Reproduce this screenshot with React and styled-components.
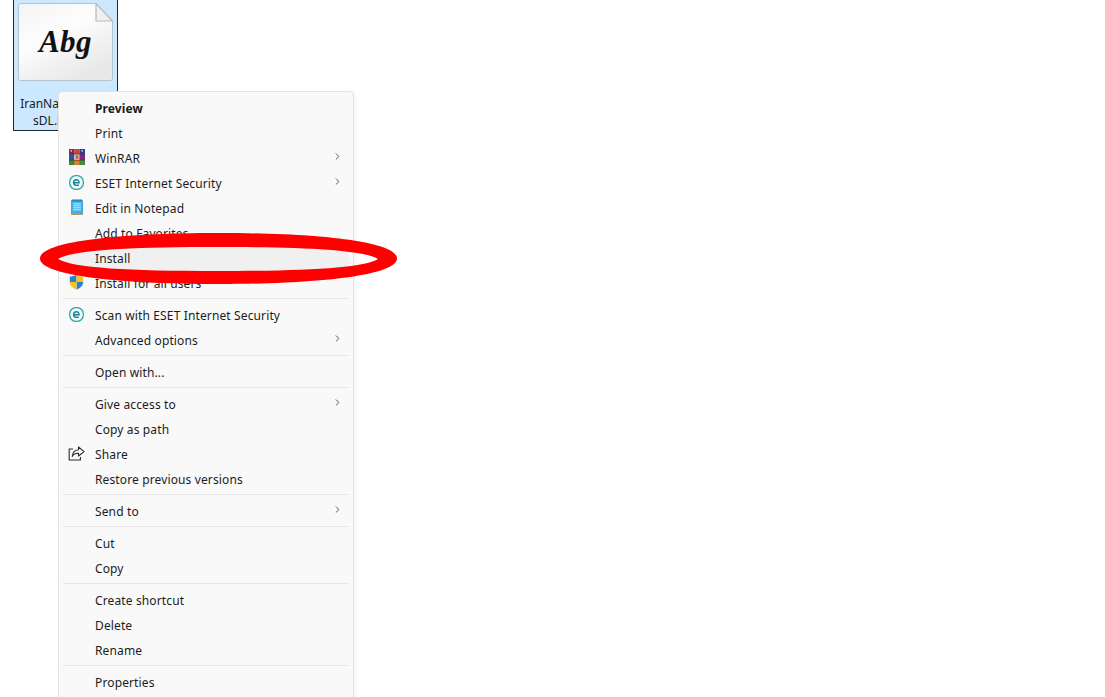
import React from "react";
import styled, { createGlobalStyle } from "styled-components";
import { ChevronRight } from "lucide-react";

const GlobalStyle = createGlobalStyle`
  html, body {
    margin: 0;
    padding: 0;
    background: #fff;
  }
  body {
    font-family: "Noto Sans", "Open Sans", sans-serif;
    color: #1a1a1a;
  }
`;

const Desktop = styled.div`
  position: relative;
  width: 1105px;
  height: 697px;
  overflow: hidden;
  background: #fff;
`;

const FileTile = styled.div`
  width: 103px;
  height: 130px;
  margin-left: 13px;
  background: #cce8ff;
  border: 1px solid #1f2a33;
  border-top: none;
  display: flex;
  flex-direction: column;
  align-items: center;
`;

const FontPage = styled.div`
  position: relative;
  width: 95px;
  height: 78px;
  margin-top: 3px;
  display: flex;
  align-items: center;
  justify-content: center;
`;

const PageArt = styled.svg`
  position: absolute;
  inset: 0;
`;

const Sample = styled.span`
  position: relative;
  font-family: "Liberation Serif", serif;
  font-style: italic;
  font-weight: 700;
  font-size: 31px;
  letter-spacing: 0.5px;
  color: #111;
`;

const FileName = styled.div`
  margin-top: 14px;
  width: 100%;
  font-size: 12px;
  line-height: 17px;
  text-align: center;
  color: #1a1a1a;
`;

const Menu = styled.div`
  position: absolute;
  left: 58px;
  top: 91px;
  width: 296px;
  box-sizing: border-box;
  padding: 4px 0;
  background: #f9f9f9;
  border: 1px solid #e3e3e3;
  border-radius: 4px;
  box-shadow: 1px 1px 3px rgba(0, 0, 0, 0.06);
`;

const Row = styled.div`
  display: flex;
  align-items: center;
  height: 25px;
  margin: 0 4px;
  border-radius: 3px;
  background: ${(p) => (p.$active ? "#f0f0f0" : "transparent")};
`;

const IconSlot = styled.span`
  width: 32px;
  flex: none;
  display: flex;
  align-items: center;
  justify-content: center;
  padding-right: 5px;
  box-sizing: border-box;
  margin-top: -3px;
  svg {
    display: block;
  }
`;

const Label = styled.span`
  flex: 1;
  font-size: 12px;
  letter-spacing: ${(p) => (p.$bold ? "0.1px" : "0.13px")};
  font-weight: ${(p) => (p.$bold ? 700 : 400)};
  white-space: nowrap;
  color: #1c1c1c;
`;

const Arrow = styled.span`
  width: 17px;
  flex: none;
  display: flex;
  color: #222;
  margin-top: -5px;
  svg {
    display: block;
  }
`;

const Separator = styled.div`
  height: 1px;
  margin: 2px 4px 4px;
  background: #e6e6e6;
`;

const Circle = styled.svg`
  position: absolute;
  left: 38px;
  top: 231px;
  pointer-events: none;
`;

const FilePageArt = () => (
  <PageArt width="95" height="78" viewBox="0 0 95 78">
    <defs>
      <linearGradient id="pageFill" x1="0" y1="0" x2="0.6" y2="1">
        <stop offset="0" stopColor="#f4f4f4" />
        <stop offset="0.45" stopColor="#fdfdfd" />
        <stop offset="1" stopColor="#e8e8e8" />
      </linearGradient>
    </defs>
    <path
      d="M2.5 .5H78L94.5 18V75.5a2 2 0 0 1-2 2H2.5a2 2 0 0 1-2-2V2.5a2 2 0 0 1 2-2z"
      fill="url(#pageFill)"
      stroke="#b4c2cc"
    />
    <path d="M78 .5V18H94.5z" fill="#f0f0f0" stroke="#b9b9b9" strokeWidth="1.2" />
  </PageArt>
);

const WinRarIcon = () => (
  <svg width="16" height="16" viewBox="0 0 16 16">
    <rect x="0" y="0" width="5.4" height="16" fill="#8e1f57" />
    <rect x="5.3" y="0" width="5.4" height="16" fill="#c9473a" />
    <rect x="10.6" y="0" width="5.4" height="16" fill="#2c3f9b" />
    <rect x="0" y="5" width="5.4" height="6" fill="#3452a8" />
    <rect x="5.3" y="5" width="5.4" height="6" fill="#f0d9c0" />
    <rect x="10.6" y="5" width="5.4" height="6" fill="#7a2d7e" />
    <rect x="0" y="11" width="5.4" height="5" fill="#2f8a3c" />
    <rect x="5.3" y="11" width="5.4" height="5" fill="#d8822b" />
    <rect x="10.6" y="11" width="5.4" height="5" fill="#3c8f3f" />
    <rect x="1.5" y="1" width="1.4" height="1.6" fill="#f2d98a" />
    <rect x="12.5" y="1" width="1.4" height="1.6" fill="#d8d8e8" />
    <rect x="0" y="4.6" width="16" height="0.8" fill="#5a2a3a" />
    <rect x="0" y="10.8" width="16" height="0.6" fill="#3a2a2a" />
    <rect x="6.8" y="6" width="0.9" height="4" fill="#8a3030" />
    <rect x="8.4" y="6" width="0.9" height="4" fill="#8a3030" />
  </svg>
);

const EsetIcon = () => (
  <svg width="15" height="15" viewBox="0 0 15 15">
    <rect x="0.7" y="0.7" width="13.6" height="13.6" rx="6" fill="#f4fbfb" stroke="#25a5ac" strokeWidth="1.3" />
    <path
      d="M4.6 7.7h5.5c.1-1.7-1-2.9-2.6-2.9-1.7 0-2.9 1.2-2.9 2.8 0 1.7 1.2 2.8 3 2.8.9 0 1.6-.2 2.2-.6"
      fill="none"
      stroke="#1b7f95"
      strokeWidth="1.4"
    />
  </svg>
);

const NotepadIcon = () => (
  <svg width="12" height="16" viewBox="0 0 12 16">
    <rect x="0.4" y="1.2" width="11.2" height="14.4" rx="0.8" fill="#3db2ee" stroke="#2388c8" strokeWidth="0.7" />
    <rect x="0.4" y="14.4" width="11.2" height="1.4" fill="#d98f3a" />
    <path d="M2 0.3v2.2M4 0.3v2.2M6 0.3v2.2M8 0.3v2.2M10 0.3v2.2" stroke="#27506e" strokeWidth="0.8" />
    <path d="M2.2 4.8h7.6M2.2 6.8h7.6M2.2 8.8h7.6M2.2 10.8h7.6" stroke="#dcf2fd" strokeWidth="0.9" />
  </svg>
);

const ShieldIcon = () => (
  <svg width="15" height="16" viewBox="0 0 15 16">
    <path d="M0.8 2.6C3 2.6 5.5 2 7.5 0.5V8H0.8z" fill="#2a7fd6" />
    <path d="M7.5 0.5C9.5 2 12 2.6 14.2 2.6V8H7.5z" fill="#f5c518" />
    <path d="M7.5 8h6.7c0 3.6-3 6.2-6.7 7.5z" fill="#2a7fd6" />
    <path d="M0.8 8h6.7v7.5C3.8 14.2 0.8 11.6 0.8 8z" fill="#f5c518" />
  </svg>
);

const ShareIcon = () => (
  <svg width="17" height="15" viewBox="0 0 17 15" fill="none" stroke="#2b2b2b" strokeWidth="1.1">
    <path d="M5 3H1.2v11h11.2v-3" />
    <path d="M10.5 1l5.6 4.6-5.6 4.4V7.3C7.5 7.2 5.6 8.2 4.2 10.4 4.6 6.8 6.8 4.2 10.5 3.8z" strokeLinejoin="round" />
  </svg>
);

const sections = [
  [
    { label: "Preview", bold: true },
    { label: "Print" },
    { label: "WinRAR", icon: <WinRarIcon />, more: true },
    { label: "ESET Internet Security", icon: <EsetIcon />, more: true },
    { label: "Edit in Notepad", icon: <NotepadIcon /> },
    { label: "Add to Favorites" },
    { label: "Install", active: true },
    { label: "Install for all users", icon: <ShieldIcon /> },
  ],
  [
    { label: "Scan with ESET Internet Security", icon: <EsetIcon /> },
    { label: "Advanced options", more: true },
  ],
  [{ label: "Open with..." }],
  [
    { label: "Give access to", more: true },
    { label: "Copy as path" },
    { label: "Share", icon: <ShareIcon /> },
    { label: "Restore previous versions" },
  ],
  [{ label: "Send to", more: true }],
  [{ label: "Cut" }, { label: "Copy" }],
  [{ label: "Create shortcut" }, { label: "Delete" }, { label: "Rename" }],
  [{ label: "Properties" }],
];

export default function App() {
  return (
    <>
      <GlobalStyle />
      <Desktop>
        <FileTile>
          <FontPage>
            <FilePageArt />
            <Sample>Abg</Sample>
          </FontPage>
          <FileName>
            IranNastaliq-We
            <br />
            sDL.ir-fonts
          </FileName>
        </FileTile>

        <Menu>
          {sections.map((items, i) => (
            <React.Fragment key={i}>
              {i > 0 && <Separator />}
              {items.map((item) => (
                <Row key={item.label} $active={item.active}>
                  <IconSlot>{item.icon}</IconSlot>
                  <Label $bold={item.bold}>{item.label}</Label>
                  {item.more && (
                    <Arrow>
                      <ChevronRight size={11} strokeWidth={1.6} />
                    </Arrow>
                  )}
                </Row>
              ))}
            </React.Fragment>
          ))}
        </Menu>

        <Circle width="362" height="56" viewBox="0 0 362 56">
          <path
            fillRule="evenodd"
            fill="#fe0000"
            d="M2 27.5C2 11.7 71.8 2 180.5 2S359 11.7 359 27.5 289.2 53 180.5 53 2 43.3 2 27.5z M20 28C35 19 90 16 180 16S325 19 340 28C325 37 270 40 180 40S35 37 20 28z"
          />
        </Circle>
      </Desktop>
    </>
  );
}
